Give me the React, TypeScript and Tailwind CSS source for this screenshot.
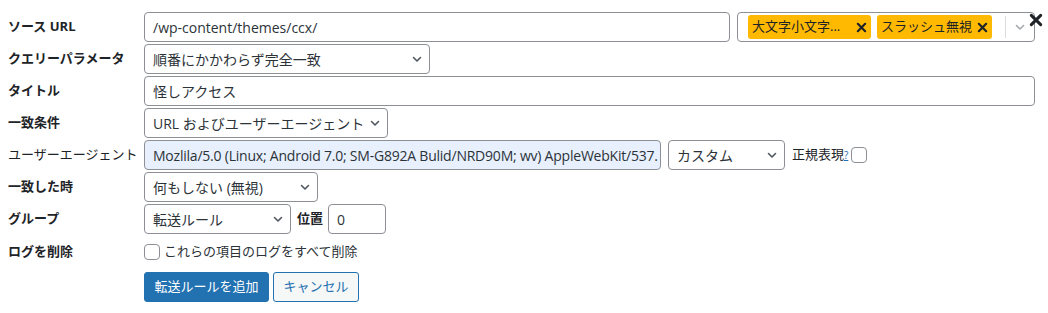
const font = { fontFamily: '"Open Sans", "Noto Sans CJK JP", sans-serif' };

function Chevron({ className = "" }: { className?: string }) {
  return (
    <svg width="16" height="16" viewBox="0 0 16 16" className={className} fill="none">
      <path d="M4.5 6.5 8 10l3.5-3.5" stroke="currentColor" strokeWidth="1.6" strokeLinecap="round" strokeLinejoin="round" />
    </svg>
  );
}

function Cross({ size = 12, width = 2.4 }: { size?: number; width?: number }) {
  return (
    <svg width={size} height={size} viewBox="0 0 12 12" fill="none">
      <path d="M2 2l8 8M10 2l-8 8" stroke="currentColor" strokeWidth={width} strokeLinecap="round" />
    </svg>
  );
}

function Select({ value, w }: { value: string; w: string }) {
  return (
    <div
      className={`flex h-[30px] ${w} shrink-0 items-center justify-between rounded-[4px] border border-[#8c8f94] bg-white pl-[8px] pr-[4px] text-[14px] text-[#2c3338]`}
    >
      <span className="whitespace-nowrap">{value}</span>
      <Chevron className="shrink-0 text-[#50575e]" />
    </div>
  );
}

function Input({ value, w, extra = "" }: { value: string; w: string; extra?: string }) {
  return (
    <div
      className={`flex h-[30px] ${w} shrink-0 items-center overflow-hidden whitespace-nowrap rounded-[4px] border border-[#8c8f94] px-[8px] text-[14px] text-[#2c3338] ${extra}`}
    >
      {value}
    </div>
  );
}

function Checkbox() {
  return <span className="inline-block h-[16px] w-[16px] shrink-0 rounded-[4px] border border-[#8c8f94] bg-white" />;
}

function Row({ label, bold = true, children }: { label: string; bold?: boolean; children: React.ReactNode }) {
  return (
    <div className="flex min-h-[30px] items-center">
      <div className={`w-[136px] shrink-0 text-[13px] text-[#1d2327] ${bold ? "font-bold" : ""}`}>{label}</div>
      <div className="flex items-center">{children}</div>
    </div>
  );
}

function Tag({ text, w }: { text: string; w: string }) {
  return (
    <div className={`flex h-[24px] ${w} items-center justify-between rounded-[3px] bg-[#ffb900] pl-[4px] pr-[4px] text-[13px] text-[#1d2327]`}>
      <span className="whitespace-nowrap">{text}</span>
      <Cross size={11} width={2.4} />
    </div>
  );
}

export default function App() {
  return (
    <div className="relative h-[313px] w-[1048px] overflow-hidden bg-white pl-[8px] pt-[12px]" style={font}>
      <button className="absolute right-[5px] top-[13px] text-[#1d2327]">
        <Cross size={14} width={2.6} />
      </button>
      <div className="flex flex-col gap-[2px]">
        <Row label="ソース URL">
          <Input value="/wp-content/themes/ccx/" w="w-[586px]" />
          <div className="ml-[7px] flex h-[30px] w-[298px] items-center rounded-[4px] border border-[#8c8f94] bg-white pl-[10px] pr-[6px]">
            <Tag text="大文字小文字..." w="w-[123px]" />
            <div className="ml-[6px]">
              <Tag text="スラッシュ無視" w="w-[115px]" />
            </div>
            <div className="ml-auto flex items-center">
              <span className="h-[22px] w-px bg-[#dcdcde]" />
              <Chevron className="ml-[6px] text-[#a7aaad]" />
            </div>
          </div>
        </Row>
        <Row label="クエリーパラメータ">
          <Select value="順番にかかわらず完全一致" w="w-[286px]" />
        </Row>
        <Row label="タイトル">
          <Input value="怪しアクセス" w="w-[891px]" />
        </Row>
        <Row label="一致条件">
          <Select value="URL およびユーザーエージェント" w="w-[244px]" />
        </Row>
        <Row label="ユーザーエージェント" bold={false}>
          <Input
            value="Mozlila/5.0 (Linux; Android 7.0; SM-G892A Bulid/NRD90M; wv) AppleWebKit/537."
            w="w-[517px]"
            extra="bg-[#e8f0fe] tracking-[-0.22px]"
          />
          <div className="ml-[7px]">
            <Select value="カスタム" w="w-[117px]" />
          </div>
          <span className="ml-[7px] whitespace-nowrap text-[13px] text-[#1d2327]">
            正規表現<a className="text-[10px] text-[#2271b1] underline">?</a>
          </span>
          <span className="ml-[3px] flex">
            <Checkbox />
          </span>
        </Row>
        <Row label="一致した時">
          <Select value="何もしない (無視)" w="w-[174px]" />
        </Row>
        <Row label="グループ">
          <Select value="転送ルール" w="w-[147px]" />
          <span className="ml-[6px] text-[13px] font-bold text-[#1d2327]">位置</span>
          <div className="ml-[5px]">
            <Input value="0" w="w-[58px]" />
          </div>
        </Row>
        <div className="flex h-[32px] items-center">
          <div className="w-[136px] shrink-0 text-[13px] font-bold text-[#1d2327]">ログを削除</div>
          <label className="flex items-center gap-[4px] text-[13px] text-[#2c3338]">
            <Checkbox />
            これらの項目のログをすべて削除
          </label>
        </div>
        <div className="flex items-center pl-[136px] pt-[2px]">
          <button className="h-[30px] w-[125px] rounded-[3px] border border-[#2271b1] bg-[#2271b1] text-[13px] text-white">
            転送ルールを追加
          </button>
          <button className="ml-[4px] h-[30px] w-[86px] rounded-[3px] border border-[#2271b1] bg-[#f6f7f7] text-[13px] text-[#2271b1]">
            キャンセル
          </button>
        </div>
      </div>
    </div>
  );
}
